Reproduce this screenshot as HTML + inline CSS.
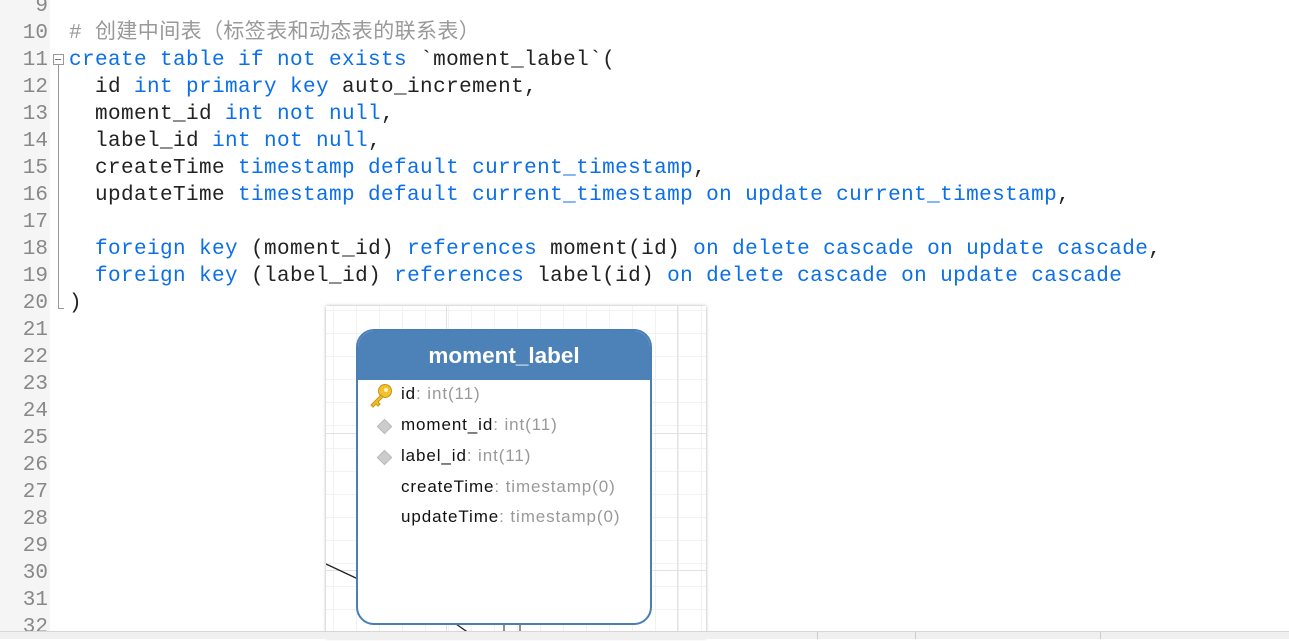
<!DOCTYPE html>
<html><head><meta charset="utf-8"><style>
body{margin:0;width:1289px;height:638px;overflow:hidden;background:#fff;position:relative;font-family:"Liberation Mono","Noto Sans CJK SC",monospace;}
.g{position:absolute;left:0;top:0;width:50px;height:638px;background:#f5f5f5;}
.ln{position:absolute;left:0;width:48px;text-align:right;font-size:21px;color:#888;line-height:27px;}
.cd{position:absolute;left:69px;font-size:21px;line-height:27px;color:#222;white-space:pre;letter-spacing:0.4px;}
.k{color:#0a6fe8}.c{color:#999}
.panel{position:absolute;left:326px;top:306px;width:380px;height:332px;overflow:hidden;background-color:#fff;
background-image:linear-gradient(#e2e2e2 1px,transparent 1px),linear-gradient(90deg,#e2e2e2 1px,transparent 1px),linear-gradient(#f2f2f2 1px,transparent 1px),linear-gradient(90deg,#f2f2f2 1px,transparent 1px);
background-size:231px 137px,231px 137px,23px 23px,23px 23px;background-position:-111px -10px,-111px -10px,7px 4px,7px 4px;box-shadow:0 0 3px #aaa;}
.tb{position:absolute;left:356px;top:329px;width:292px;height:292px;border:2px solid #4a7fb5;border-radius:18px;background:#fff;overflow:hidden;}
.hd{height:49px;background:#4d82b8;color:#fff;font:bold 22.5px "Liberation Sans",sans-serif;text-align:center;line-height:49px;}
.f{position:absolute;left:43px;font:17px "Liberation Sans",sans-serif;letter-spacing:0.9px;color:#111;}
.f span{color:#999}
.d{position:absolute;left:21px;width:9px;height:9px;background:#ccc;border:1px solid #bbb;transform:rotate(45deg);}
.sb{position:absolute;left:0;top:631px;width:1289px;height:7px;background:#f0f0f0;border-top:1px solid #d6d6d6;}
</style></head><body>
<div class="g"></div>
<div class="ln" style="top:-7.5px">9</div>
<div class="ln" style="top:19.5px">10</div>
<div class="ln" style="top:46.5px">11</div>
<div class="ln" style="top:73.5px">12</div>
<div class="ln" style="top:100.5px">13</div>
<div class="ln" style="top:127.5px">14</div>
<div class="ln" style="top:154.5px">15</div>
<div class="ln" style="top:181.5px">16</div>
<div class="ln" style="top:208.5px">17</div>
<div class="ln" style="top:235.5px">18</div>
<div class="ln" style="top:262.5px">19</div>
<div class="ln" style="top:289.5px">20</div>
<div class="ln" style="top:316.5px">21</div>
<div class="ln" style="top:343.5px">22</div>
<div class="ln" style="top:370.5px">23</div>
<div class="ln" style="top:397.5px">24</div>
<div class="ln" style="top:424.5px">25</div>
<div class="ln" style="top:451.5px">26</div>
<div class="ln" style="top:478.5px">27</div>
<div class="ln" style="top:505.5px">28</div>
<div class="ln" style="top:532.5px">29</div>
<div class="ln" style="top:559.5px">30</div>
<div class="ln" style="top:586.5px">31</div>
<div class="ln" style="top:613.5px">32</div>
<div style="position:absolute;left:53px;top:54px;width:9px;height:9px;border:1px solid #999;background:#fff"></div>
<div style="position:absolute;left:55px;top:59px;width:6px;height:1px;background:#777"></div>
<div style="position:absolute;left:58px;top:65px;width:1px;height:244px;background:#999"></div>
<div style="position:absolute;left:58px;top:308px;width:6px;height:1px;background:#999"></div>
<div class="cd c" style="top:19.5px"># 创建中间表（标签表和动态表的联系表）</div>
<div class="cd" style="top:46.5px"><span class="k">create table if not exists</span> `moment_label`(</div>
<div class="cd" style="top:73.5px">  id <span class="k">int primary key</span> auto_increment,</div>
<div class="cd" style="top:100.5px">  moment_id <span class="k">int not null</span>,</div>
<div class="cd" style="top:127.5px">  label_id <span class="k">int not null</span>,</div>
<div class="cd" style="top:154.5px">  createTime <span class="k">timestamp default current_timestamp</span>,</div>
<div class="cd" style="top:181.5px">  updateTime <span class="k">timestamp default current_timestamp on update current_timestamp</span>,</div>
<div class="cd" style="top:235.5px">  <span class="k">foreign key</span> (moment_id) <span class="k">references</span> moment(id) <span class="k">on delete cascade on update cascade</span>,</div>
<div class="cd" style="top:262.5px">  <span class="k">foreign key</span> (label_id) <span class="k">references</span> label(id) <span class="k">on delete cascade on update cascade</span></div>
<div class="cd" style="top:289.5px">)</div>
<div class="panel">
<svg width="380" height="340" style="position:absolute;left:0;top:0"><line x1="0" y1="258" x2="32" y2="273" stroke="#222" stroke-width="1.3"/><line x1="130" y1="318" x2="150" y2="332" stroke="#222" stroke-width="1.3"/><line x1="178" y1="318" x2="178" y2="332" stroke="#222"/><line x1="194" y1="318" x2="194" y2="332" stroke="#222"/></svg>
</div>
<div class="tb">
<div class="hd">moment_label</div>
<svg style="position:absolute;left:10px;top:52px" width="26" height="26" viewBox="0 0 26 26"><circle cx="17" cy="8" r="6.5" fill="#f2c12e" stroke="#c9930e"/><circle cx="18" cy="7" r="2" fill="#fff5c0"/><path d="M13 12 L3 22 L5 24 L8 21 L10 23 L12 21 L10 19 L15 14Z" fill="#f2c12e" stroke="#c9930e"/></svg>
<div class="f" style="top:53px">id<span>: int(11)</span></div>
<div class="d" style="top:90px"></div>
<div class="f" style="top:84px">moment_id<span>: int(11)</span></div>
<div class="d" style="top:121px"></div>
<div class="f" style="top:115px">label_id<span>: int(11)</span></div>
<div class="f" style="top:146px">createTime<span>: timestamp(0)</span></div>
<div class="f" style="top:176px">updateTime<span>: timestamp(0)</span></div>
</div>
<div class="sb"><div style="position:absolute;left:817px;top:0;width:1px;height:7px;background:#ccc"></div><div style="position:absolute;left:915px;top:0;width:1px;height:7px;background:#ccc"></div><div style="position:absolute;left:1100px;top:0;width:1px;height:7px;background:#ccc"></div></div>
</body></html>
